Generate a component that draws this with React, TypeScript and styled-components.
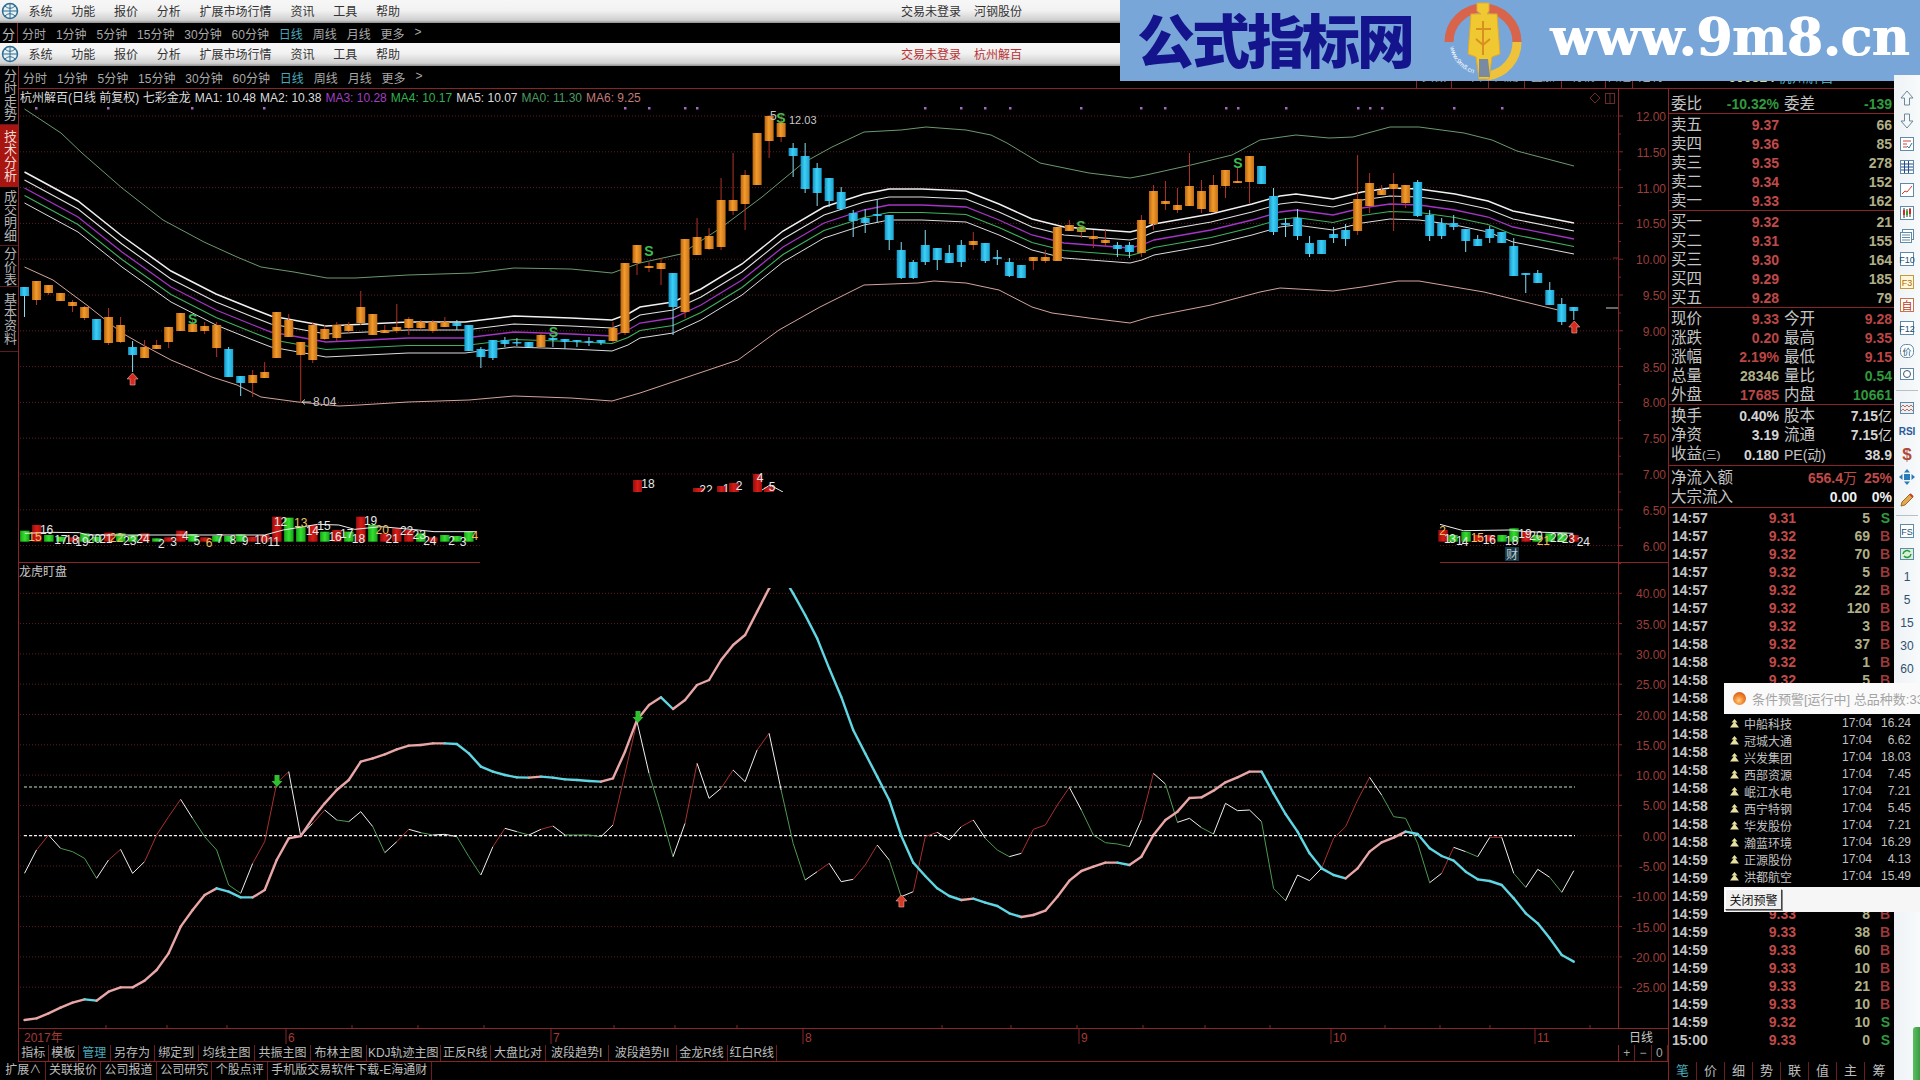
import React from "react";
import styled, { createGlobalStyle } from "styled-components";

const SANS = `"Liberation Sans", "Noto Sans CJK SC", sans-serif`;
const LINE = "#8a2429";

const Global = createGlobalStyle`
  html, body { margin: 0; padding: 0; background: #000; overflow: hidden; }
  body { font-family: ${SANS}; }
`;

/* ---------------- page frame ---------------- */
const Page = styled.div`
  position: relative;
  width: 1920px;
  height: 1080px;
  display: flex;
  overflow: hidden;
  background: #000;
  color: #b8b8b8;
  font-size: 12px;
`;
const MainCol = styled.div`
  width: 1894px;
  height: 1080px;
  display: flex;
  flex-direction: column;
`;
const MenuBar = styled.div`
  height: 23px;
  flex: none;
  box-sizing: border-box;
  display: flex;
  align-items: center;
  padding: 0 0 2px 1px;
  background: linear-gradient(#f7f7f7 0%, #f2f2f2 45%, #cfcfcf 88%, #8f8f8f 100%);
  color: #333;
`;
const MenuItem = styled.span`
  padding: 0 9.4px;
  white-space: nowrap;
`;
const MenuLogo = styled.svg`
  width: 18px;
  height: 18px;
  flex: none;
`;
const MenuStatus = styled.div<{ $alert?: boolean }>`
  margin-left: auto;
  margin-right: 872px;
  display: flex;
  gap: 13px;
  color: ${(p) => (p.$alert ? "#b83232" : "#333")};
`;
const Toolbar = styled.div`
  flex: none;
  height: 20px;
  display: flex;
  align-items: center;
`;
const ToolbarTall = styled(Toolbar)`
  height: 22px;
  padding-left: 4px;
  overflow: hidden;
`;
const CutTab = styled.span`
  width: 18px;
  height: 20px;
  flex: none;
  box-sizing: border-box;
  border-right: 1px solid ${LINE};
  font-size: 13px;
  text-align: center;
  line-height: 24px;
  overflow: hidden;
  margin-right: 4px;
`;
const PeriodList = styled.div`
  display: flex;
  gap: 9.9px;
`;
const Period = styled.span<{ $on?: boolean }>`
  white-space: nowrap;
  color: ${(p) => (p.$on ? "#4aa9bb" : "#a9a9a9")};
`;
const HiddenTabs = styled.div`
  margin-left: auto;
  display: flex;
  height: 22px;
`;
const HiddenTab = styled.span<{ $w: number }>`
  width: ${(p) => p.$w}px;
  box-sizing: border-box;
  border-left: 1px solid ${LINE};
  text-align: center;
  line-height: 22px;
  color: #aaa;
`;
const StockHead = styled.div`
  width: 226px;
  flex: none;
  display: flex;
  justify-content: center;
  gap: 3px;
  font-size: 14px;
  line-height: 22px;
`;
const StockCode = styled.span`
  color: #e8dc78;
  font-weight: 700;
`;
const StockName = styled.span`
  color: #4aa9bb;
`;

const Workspace = styled.div`
  flex: 1;
  min-height: 0;
  display: flex;
`;
const LeftTabs = styled.div`
  width: 19px;
  flex: none;
  box-sizing: border-box;
  border-right: 1px solid ${LINE};
  display: flex;
  flex-direction: column;
`;
const LeftTab = styled.div<{ $h: number; $on?: boolean }>`
  height: ${(p) => p.$h}px;
  flex: none;
  box-sizing: border-box;
  writing-mode: vertical-rl;
  display: flex;
  align-items: center;
  justify-content: center;
  font-size: 13px;
  line-height: 18px;
  border-bottom: 1px solid ${(p) => (p.$on ? "transparent" : "#5a1c20")};
  background: ${(p) => (p.$on ? "#a81410" : "transparent")};
  color: ${(p) => (p.$on ? "#f0d8d0" : "#b4b4b4")};
`;
const CenterCol = styled.div`
  width: 1875px;
  flex: none;
  display: flex;
  flex-direction: column;
`;
const WorkRow = styled.div`
  height: 974px;
  flex: none;
  display: flex;
  box-sizing: border-box;
  border-top: 1px solid ${LINE};
`;
const ChartArea = styled.div`
  width: 1649px;
  flex: none;
  display: flex;
  flex-direction: column;
`;
const Canvas = styled.div`
  position: relative;
  height: 956px;
  flex: none;
`;
const ChartSvg = styled.svg`
  display: block;
  width: 1649px;
  height: 956px;
  font-family: ${SANS};
`;
const Legend = styled.div`
  position: absolute;
  left: 1px;
  top: 1px;
  display: flex;
  gap: 4px;
  line-height: 16px;
  white-space: nowrap;
  color: #d8d8d8;
`;
const LegendItem = styled.span<{ $c?: string }>`
  color: ${(p) => p.$c ?? "#dcdcdc"};
`;
const AxisText = styled.text`
  fill: #9c3f3b;
  font-size: 12px;
  text-anchor: end;
`;
const DateText = styled.text`
  fill: #a33b38;
  font-size: 12px;
`;
const NoteText = styled.text<{ $s?: number }>`
  fill: #c8c8c8;
  font-size: ${(p) => p.$s ?? 12}px;
`;
const SignalText = styled.text`
  fill: #3dbb52;
  font-size: 14px;
  font-weight: 700;
  text-anchor: middle;
`;
const VolText = styled.text<{ $warm?: boolean }>`
  fill: ${(p) => (p.$warm ? "#f0c060" : "#e8e8e8")};
  font-size: 12px;
  text-anchor: middle;
  dominant-baseline: middle;
`;
const ChartTabs = styled.div`
  flex: 1;
  display: flex;
  align-items: center;
  box-sizing: border-box;
  border-bottom: 1px solid ${LINE};
`;
const ChartTab = styled.span<{ $on?: boolean; $w: number }>`
  height: 100%;
  width: ${(p) => p.$w}px;
  flex: none;
  box-sizing: border-box;
  text-align: center;
  line-height: 16px;
  white-space: nowrap;
  border-right: 1px solid #6a1c20;
  color: ${(p) => (p.$on ? "#4aa9bb" : "#bcbcbc")};
`;
const ZoomCtl = styled.div`
  margin-left: auto;
  width: 50px;
  height: 100%;
  display: flex;
  box-sizing: border-box;
  border-left: 1px solid ${LINE};
`;
const ZoomBtn = styled.span`
  flex: 1;
  text-align: center;
  line-height: 16px;
  border-right: 1px solid #6a1c20;
  color: #a8a8a8;
`;

/* ---------------- quote panel ---------------- */
const Panel = styled.div`
  width: 226px;
  flex: none;
  box-sizing: border-box;
  border-left: 1px solid ${LINE};
  display: flex;
  flex-direction: column;
`;
const Group = styled.div<{ $h: number; $top?: number }>`
  height: ${(p) => p.$h}px;
  flex: none;
  box-sizing: border-box;
  padding-top: ${(p) => p.$top ?? 0}px;
  border-bottom: 1px solid ${LINE};
`;
const QuoteRow = styled.div<{ $h?: number }>`
  height: ${(p) => p.$h ?? 19}px;
  padding: 0 2px;
  display: grid;
  grid-template-columns: 32px 76px 37px 76px;
  align-items: center;
  align-content: center;
  white-space: nowrap;
`;
const Label = styled.span`
  font-size: 15.5px;
  line-height: 16px;
  color: #c4c4c4;
`;
const Label2 = styled(Label)`
  margin-left: 5px;
`;
const LabelNarrow = styled(Label2)`
  font-size: 14px;
`;
const Small = styled.span`
  font-size: 11px;
`;
const Num = styled.span<{ $c?: string }>`
  font-size: 14px;
  line-height: 16px;
  font-weight: 700;
  text-align: right;
  color: ${(p) => p.$c ?? "#c04a4a"};
`;
const FlowRow = styled.div`
  height: 19px;
  padding: 0 2px;
  display: grid;
  grid-template-columns: 1fr 60px 35px;
  align-items: center;
  align-content: center;
  white-space: nowrap;
`;
const Trades = styled.div`
  padding-top: 1px;
  flex: 1;
`;
const TradeRow = styled.div`
  height: 18px;
  padding-left: 3px;
  display: grid;
  grid-template-columns: 40px 84px 74px 20px;
  align-items: center;
`;
const TradeTime = styled.span`
  font-size: 14px;
  font-weight: 700;
  color: #c4c4c4;
`;
const Unit = styled.span`
  font-weight: 400;
  font-size: 14px;
`;

/* ---------------- footer ---------------- */
const Footer = styled.div`
  height: 18px;
  flex: none;
  display: flex;
`;
const FooterLeft = styled.div`
  width: 1668px;
  flex: none;
  display: flex;
  padding-left: 2px;
  box-sizing: border-box;
`;
const FooterTab = styled.span`
  padding: 0 3.3px;
  line-height: 17px;
  white-space: nowrap;
  border-right: 1px solid #6a1c20;
  color: #bcbcbc;
`;
const FooterRight = styled.div`
  width: 226px;
  flex: none;
  display: flex;
  box-sizing: border-box;
  border-left: 1px solid ${LINE};
`;
const PanelTab = styled.span<{ $on?: boolean }>`
  width: 28px;
  flex: none;
  box-sizing: border-box;
  text-align: center;
  font-size: 13px;
  line-height: 18px;
  border-right: 1px solid #6a1c20;
  color: ${(p) => (p.$on ? "#4aa9bb" : "#bcbcbc")};
  &:last-child { border-right: 0; }
`;

/* ---------------- side toolbar ---------------- */
const SideBar = styled.div`
  width: 26px;
  height: 1080px;
  flex: none;
  box-sizing: border-box;
  padding-top: 86px;
  display: flex;
  flex-direction: column;
  align-items: center;
  background: linear-gradient(90deg, #eef3f6, #f8fafb);
`;
const SideSlot = styled.div`
  height: 23px;
  width: 100%;
  flex: none;
  display: flex;
  align-items: center;
  justify-content: center;
  font-size: 12px;
  color: #30506e;
`;
const SideRule = styled.div<{ $h: number }>`
  height: ${(p) => p.$h}px;
  width: 22px;
  flex: none;
  display: flex;
  align-items: center;
  &::after { content: ""; width: 100%; height: 1px; background: #b8c0c6; }
`;
const SideIcon = styled.svg`
  width: 18px;
  height: 18px;
  font-family: ${SANS};
`;
const ScrollThumb = styled.div`
  margin-top: auto;
  align-self: flex-end;
  width: 7px;
  height: 53px;
  border-radius: 3px 0 0 0;
  background: linear-gradient(90deg, #5cc060, #3a9a42);
`;

/* ---------------- overlays ---------------- */
const Banner = styled.div`
  position: absolute;
  left: 1120px;
  top: 0;
  width: 800px;
  height: 81px;
  clip-path: polygon(0 0, 100% 0, 100% 75px, 774px 75px, 774px 100%, 0 100%);
  background: #78a6d8;
  display: flex;
  align-items: center;
`;
const BannerTitle = styled.div`
  margin: -6px 0 0 17px;
  width: 276px;
  flex: none;
  font-family: "Noto Sans CJK SC", sans-serif;
  font-weight: 900;
  font-size: 58px;
  line-height: 76px;
  letter-spacing: -3px;
  white-space: nowrap;
  color: #14148c;
`;
const BannerLogo = styled.svg`
  margin-left: 30px;
  width: 80px;
  height: 80px;
  flex: none;
  font-family: ${SANS};
`;
const BannerUrl = styled.div`
  margin: -8px 0 0 27px;
  font-family: "DejaVu Serif", serif;
  font-weight: 700;
  font-size: 52px;
  letter-spacing: -0.3px;
  line-height: 70px;
  white-space: nowrap;
  text-shadow: 1px 0 #fff;
  color: #fff;
`;
const Popup = styled.div`
  position: absolute;
  left: 1724px;
  top: 683px;
  width: 196px;
  height: 229px;
  display: flex;
  flex-direction: column;
  background: #000;
`;
const PopupHead = styled.div`
  height: 31px;
  flex: none;
  display: flex;
  align-items: center;
  padding-left: 9px;
  gap: 6px;
  font-size: 13px;
  background: #fafafa;
  color: #a4a4a4;
  white-space: nowrap;
  overflow: hidden;
`;
const PopupBall = styled.span`
  width: 13px;
  height: 13px;
  flex: none;
  border-radius: 50%;
  background: radial-gradient(circle at 45% 65%, #ffd088 0, #f28a30 40%, #c83c10 100%);
`;
const PopupList = styled.div`
  flex: 1;
  padding-top: 0.5px;
`;
const PopupRow = styled.div`
  height: 17px;
  display: grid;
  grid-template-columns: 20px 98px 29px 40px;
  align-items: center;
  color: #c0c0c0;
`;
const PopupIcon = styled.svg`
  width: 9px;
  height: 9px;
  justify-self: center;
`;
const PopupPrice = styled.span`
  text-align: right;
`;
const PopupFoot = styled.div`
  height: 25px;
  flex: none;
  display: flex;
  align-items: center;
  padding-left: 1px;
  background: #f6f6f6;
`;
const CloseBtn = styled.button`
  width: 57px;
  height: 21px;
  padding: 0;
  font: 12px ${SANS};
  color: #111;
  background: #f0f0f0;
  border: 1px solid;
  border-color: #fff #444 #444 #fff;
  box-shadow: 1px 1px 0 #888;
`;

/* ---------------- data ---------------- */
const X = (i: number) => 24.5 + 12.01 * i;
const priceY = (p: number) => 116 + (12 - p) * 71.6;
const subY = (v: number) => 835.7 - 6.06 * v;

// kind: 0 orange, 1 blue; body top, body bottom, wick top, wick bottom
type K = [number, number, number, number?, number?];
const candles: K[] = [
  [1, 287, 296, 287, 317], [0, 281, 300, 281, 305], [0, 285, 293, 285, 295], [0, 293, 301], [0, 302, 306, 300, 312],
  [0, 307, 318, 306, 320], [1, 319, 340], [0, 317, 343, 308, 345], [0, 325, 342, 317, 343], [1, 347, 355, 341, 372],
  [0, 347, 358, 340, 358], [0, 345, 349, 340, 349], [0, 327, 342, 327, 348], [0, 313, 331], [0, 324, 332, 320, 332],
  [0, 326, 331, 322, 334], [0, 325, 348, 322, 357], [1, 349, 377, 347, 377], [1, 376, 383, 376, 396], [0, 375, 383, 370, 397],
  [0, 372, 378, 362, 378], [0, 312, 358], [0, 320, 337, 314, 337], [0, 342, 355, 342, 403], [0, 325, 360, 322, 363],
  [0, 329, 339, 325, 340], [0, 325, 338, 322, 341], [0, 325, 331, 322, 333], [0, 307, 323, 291, 325], [0, 314, 335],
  [0, 330, 333, 325, 333], [0, 327, 331, 304, 333], [0, 319, 328, 317, 335], [0, 322, 328, 320, 330], [0, 322, 331, 320, 333],
  [0, 322, 327, 317, 327], [1, 323, 326, 320, 330], [1, 325, 351], [1, 349, 357, 347, 368], [1, 340, 358, 340, 360],
  [1, 340, 344, 337, 347], [1, 342, 343, 338, 346], [1, 342, 347], [0, 335, 347, 332, 347], [1, 338, 340, 335, 347],
  [1, 339, 342, 339, 349], [1, 340, 342, 340, 347], [1, 341, 343, 337, 346], [1, 340, 343, 340, 345], [0, 328, 341, 322, 343],
  [0, 263, 333, 263, 335], [0, 245, 263, 245, 275], [0, 266, 268, 262, 272], [0, 263, 269, 258, 285], [1, 273, 307, 273, 335],
  [0, 239, 312, 239, 318], [0, 237, 255, 218, 255], [0, 236, 249, 228, 250], [0, 200, 247, 178, 250], [0, 200, 211, 153, 215],
  [0, 175, 204, 170, 230], [0, 133, 185], [0, 116, 141, 115, 158], [0, 123, 137, 115, 142], [1, 148, 156, 143, 177],
  [1, 156, 189, 143, 193], [1, 168, 193, 163, 206], [1, 178, 201, 178, 207], [1, 192, 209, 187, 210], [1, 213, 221, 210, 237],
  [1, 218, 223, 209, 233], [1, 214, 216, 199, 223], [1, 215, 240, 215, 250], [1, 250, 278, 242, 279], [1, 262, 278, 260, 279],
  [1, 245, 262, 230, 265], [1, 248, 260, 248, 270], [1, 253, 263, 245, 263], [1, 245, 262, 240, 267], [0, 241, 245, 232, 250],
  [1, 243, 261, 243, 263], [1, 257, 259, 250, 265], [1, 262, 276, 258, 277], [1, 265, 278], [0, 257, 261, 257, 270],
  [0, 257, 261, 250, 263], [0, 227, 261], [0, 225, 231, 220, 231], [0, 227, 232, 227, 238], [0, 236, 239, 230, 248],
  [0, 240, 243, 230, 246], [1, 245, 249, 242, 257], [1, 245, 252, 242, 258], [0, 220, 253, 215, 257], [0, 191, 224, 185, 230],
  [0, 201, 204, 181, 210], [0, 205, 210, 188, 213], [0, 186, 206, 153, 206], [0, 191, 209, 180, 213], [0, 185, 212, 175, 213],
  [0, 170, 186, 170, 198], [0, 181, 183, 167, 183], [0, 156, 182, 156, 203], [1, 166, 184], [1, 196, 232, 188, 235],
  [1, 223, 225, 218, 237], [1, 218, 236, 209, 240], [1, 243, 254, 236, 257], [1, 240, 254], [1, 234, 238, 227, 243],
  [1, 230, 239, 224, 246], [0, 199, 231, 155, 235], [0, 183, 206, 173, 213], [0, 190, 195, 185, 195], [0, 184, 189, 173, 231],
  [0, 185, 203, 185, 208], [1, 182, 216, 180, 217], [1, 215, 236, 210, 241], [1, 223, 236, 218, 239], [1, 223, 227, 215, 230],
  [1, 229, 241, 229, 252], [1, 239, 246, 235, 246], [1, 229, 238, 226, 243], [1, 232, 243], [1, 246, 276, 238, 276],
  [1, 273, 275, 273, 293], [1, 273, 283, 270, 283], [1, 290, 305, 282, 305], [1, 304, 322, 298, 325], [1, 307, 311, 307, 320],
];
type P = [number, number];
const pts = (a: P[], d = 0) => a.map(([x, y]) => `${x},${y + d}`).join(" ");
const upperBand: P[] = [[24.5,109],[61,133],[82,153],[122,188],[163,220],[204,242],[237,257],[261,267],[294,272],[327,278],[355,278],[408,275],[473,273],[514,268],[571,269],[612,273],[640,263],[681,254],[722,227],[762,197],[803,163],[832,147],[864,132],[901,130],[926,127],[966,130],[991,135],[1007,143],[1040,163],[1089,173],[1130,178],[1146,175],[1191,165],[1232,155],[1260,140],[1296,135],[1329,138],[1353,137],[1390,127],[1419,127],[1464,133],[1492,140],[1517,151],[1574,166]];
const midBand: P[] = [[24.5,188],[78,217],[122,252],[171,287],[216,310],[253,325],[271,332],[326,342],[408,338],[465,338],[514,332],[571,334],[612,336],[628,330],[640,323],[673,318],[701,305],[742,280],[783,247],[824,223],[864,210],[889,205],[922,205],[966,207],[999,220],[1032,235],[1064,243],[1130,248],[1142,245],[1154,240],[1211,230],[1252,220],[1280,212],[1296,210],[1333,215],[1362,208],[1390,204],[1419,205],[1455,210],[1488,217],[1513,227],[1574,239]];
const lowerBand: P[] = [[24.5,267],[53,280],[88,306],[122,333],[143,345],[171,360],[212,377],[237,385],[261,397],[298,402],[339,406],[359,405],[408,402],[469,400],[514,396],[571,398],[612,401],[640,393],[738,360],[779,330],[820,307],[864,285],[918,283],[934,281],[966,283],[999,290],[1032,307],[1052,313],[1089,318],[1130,323],[1150,317],[1211,305],[1260,292],[1280,288],[1333,291],[1362,287],[1398,281],[1419,281],[1484,292],[1517,300],[1558,310]];
const bandLines = [
  { d: -16, c: "#f0f0f0", w: 1.5 }, { d: -8, c: "#e0e0e0", w: 1.1 }, { d: 0, c: "#a334c4", w: 1.3 },
  { d: 7.5, c: "#3fb25e", w: 1.1 }, { d: 15, c: "#dcdcdc", w: 1 },
];
const dots = [36,108,192,264,625,649,685,697,925,961,985,1010,1081,1141,1165,1226,1238,1286,1358,1370,1382,1454,1502];

const thick = [1380,1375,1360,1343,1328,1318,1322,1295,1282,1282,1262,1230,1180,1100,1050,1005,985,995,1012,1012,990,900,835,828,775,730,690,660,605,595,583,568,557,555,550,550,552,580,620,635,645,652,653,650,653,658,660,663,665,655,575,480,435,412,447,420,375,360,300,255,225,155,85,40,100,165,235,325,410,510,580,650,720,827,908,948,985,1008,1020,1016,1028,1038,1060,1071,1065,1052,1010,962,933,920,908,908,915,890,825,780,755,714,712,692,667,652,635,635,700,762,815,880,925,945,955,925,875,847,833,815,822,865,888,902,935,958,963,975,1015,1060,1090,1135,1185,1205];
const thin = [940,870,825,865,875,895,955,900,868,940,905,825,770,718,775,830,870,975,1000,910,845,670,635,828,790,750,780,785,755,800,878,845,808,818,825,823,830,890,945,860,805,815,825,808,798,825,825,825,830,795,640,485,640,760,890,790,610,715,685,630,665,570,520,690,850,960,935,910,965,958,915,855,900,1010,995,830,817,840,800,780,835,870,890,880,808,795,735,682,750,825,848,852,860,780,640,672,787,775,803,822,730,752,750,785,985,1022,945,962,925,835,800,720,652,705,770,775,850,968,940,862,875,890,832,832,940,982,928,952,997,932];
const zy = (z: number) => 560 + z / 3;

const thickSegs = (() => {
  let up = true;
  return thick.slice(1).map((z, k) => {
    const d = z - thick[k];
    if (d !== 0) up = d < 0;
    return { x1: X(k), y1: zy(thick[k]), x2: X(k + 1), y2: zy(z), c: up ? "#e8a6a6" : "#5fd6e2" };
  });
})();
const thinSegs = (() => {
  let prev = 0;
  return thin.slice(1).map((z, k) => {
    const d = Math.sign(z - thin[k]) || prev;
    const c = d !== prev ? "#f0f0f0" : d < 0 ? "#a8302e" : "#4c9a50";
    prev = d;
    return { x1: X(k), y1: zy(thin[k]), x2: X(k + 1), y2: zy(z), c };
  });
})();

type V = [0 | 1, number];
const volLeft: V[] = [[0,152],[1,135],[0,165],[0,170],[1,172],[0,160],[0,170],[1,158],[0,160],[0,165],[1,160],[0,175],[1,172],[1,152],[0,162],[1,172],[0,167],[0,168],[0,163],[1,170],[1,165],[1,110],[0,113],[0,140],[1,135],[0,155],[1,150],[0,155],[1,110],[0,135],[1,160],[1,145],[1,150],[0,160],[1,172],[0,165],[0,168],[0,155]];
const labelsLeft: [string, number, number][] = [["15",66,172],["16",88,152],["17",115,182],["18",136,182],["19",155,188],["20",178,180],["21",200,180],["22",220,175],["23",245,185],["24",270,178],["2",305,195],["3",328,188],["4",350,170],["5",372,185],["6",395,190],["7",415,178],["8",440,182],["9",463,185],["10",493,182],["11",517,188],["12",530,128],["13",568,130],["14",590,155],["15",612,140],["16",633,172],["17",655,165],["18",677,178],["19",700,125],["20",722,152],["21",741,180],["22",768,155],["23",792,168],["24",812,185],["2",853,185],["3",875,188],["4",897,170]];
const maLeft: P[] = [[47,160],[100,157],[150,158],[165,165],[280,165],[500,165],[535,150],[600,133],[640,135],[670,148],[720,140],[790,150],[820,155],[900,155]];
const volRight: [0 | 1, number, number][] = [[1,1443,150],[0,1453,165],[0,1466,155],[1,1478,165],[1,1490,165],[0,1502,165],[0,1514,145],[1,1526,155],[0,1537,165],[0,1550,160],[0,1562,158],[1,1574,165]];
const labelsRight: [string, number, number][] = [["2",128,155],["1",142,178],["3",158,178],["1",178,185],["4",195,188],["15",232,175],["16",268,182],["18",335,185],["19",375,165],["20",408,170],["21",430,185],["22",470,175],["23",505,178],["24",550,188]];
const maRight: P[] = [[120,133],[190,152],[330,150],[378,155],[520,160]];
const fragBars: [number, number, number][] = [[633,9,480],[693,11,488],[717,9,486],[729,10,483],[753,9,474],[764,10,487]];
const fragLabels: [string, number, number][] = [["18",648,485],["22",706,491],["1",726,490],["2",739,487],["4",760,479],["5",772,488]];
const xDates: [string, number][] = [["6",288],["7",553],["8",805],["9",1081],["10",1333],["11",1537]];
const xTicks = [106,167,227,352,418,484,614,675,737,942,1011,1077,1143,1205,1270,1385,1440,1490,1590];

const periods = ["分时","1分钟","5分钟","15分钟","30分钟","60分钟","日线","周线","月线","更多",">"];
const menus = ["系统","功能","报价","分析","扩展市场行情","资讯","工具","帮助"];
const chartTabs: [string, number][] = [["指标",29.5],["模板",30.5],["管理",31.5],["另存为",44],["绑定到",44.5],["均线主图",56],["共振主图",56],["布林主图",56],["KDJ轨迹主图",73.5],["正反R线",50.5],["大盘比对",55],["波段趋势I",62.5],["波段趋势II",68],["金龙R线",51],["红白R线",49.5]];
const footTabs = ["扩展∧","关联报价","公司报道","公司研究","个股点评","手机版交易软件下载-E海通财"];

const asks: [string, string, string][] = [["卖五","9.37","66"],["卖四","9.36","85"],["卖三","9.35","278"],["卖二","9.34","152"],["卖一","9.33","162"]];
const bids: [string, string, string][] = [["买一","9.32","21"],["买二","9.31","155"],["买三","9.30","164"],["买四","9.29","185"],["买五","9.28","79"]];
const TAN = "#b0b088";
const GREEN = "#2f9a3e";
const WHITE = "#d4d4d4";
const RED = "#bc4646";
type Q = [string, string, string, string, string, string];
const stats: Q[] = [
  ["现价","9.33",RED,"今开","9.28",RED],
  ["涨跌","0.20",RED,"最高","9.35",RED],
  ["涨幅","2.19%",RED,"最低","9.15",RED],
  ["总量","28346",TAN,"量比","0.54",GREEN],
  ["外盘","17685",RED,"内盘","10661",GREEN],
];
// rows behind the alert popup carry only their time, the rest is hidden in the picture
const trades: [string, string?, string?, string?][] = [
  ["14:57","9.31","5","S"],["14:57","9.32","69","B"],["14:57","9.32","70","B"],["14:57","9.32","5","B"],["14:57","9.32","22","B"],["14:57","9.32","120","B"],["14:57","9.32","3","B"],
  ["14:58","9.32","37","B"],["14:58","9.32","1","B"],["14:58","9.32","5","B"],["14:58"],["14:58"],["14:58"],["14:58"],["14:58"],["14:58"],["14:58"],["14:58"],["14:58"],
  ["14:59"],["14:59"],["14:59"],["14:59","9.33","8","B"],["14:59","9.33","38","B"],["14:59","9.33","60","B"],["14:59","9.33","10","B"],["14:59","9.33","21","B"],["14:59","9.33","10","B"],["14:59","9.32","10","S"],
  ["15:00","9.33","0","S"],
];
const alerts: [string, string][] = [["中船科技","16.24"],["冠城大通","6.62"],["兴发集团","18.03"],["西部资源","7.45"],["岷江水电","7.21"],["西宁特钢","5.45"],["华发股份","7.21"],["瀚蓝环境","16.29"],["正源股份","4.13"],["洪都航空","15.49"]];

/* ---------------- icons ---------------- */
const Frame = () => <rect x="2.5" y="2.5" width="13" height="13" fill="#fff" stroke="#5f8aa8" />;
const sideTop: React.ReactNode[] = [
  <path d="M9 2 L15 9 H11.5 V16 H6.5 V9 H3 Z" fill="#f4f8fa" stroke="#6f8796" />,
  <path d="M9 16 L15 9 H11.5 V2 H6.5 V9 H3 Z" fill="#f4f8fa" stroke="#6f8796" />,
  <g><Frame /><path d="M5 6h8M5 9h4M5 12h4" stroke="#c44" /><path d="M9 11l2 2 3-5" stroke="#2a7a9a" fill="none" /></g>,
  <g><Frame /><path d="M3 6h12M3 9h12M3 12h12M6.5 3v12M10.5 3v12" stroke="#234a8a" /></g>,
  <g><Frame /><path d="M4 13l3-3 2 1 5-6" stroke="#d83a2a" fill="none" /></g>,
  <g><Frame /><path d="M6 4v10M9 5v8M12 4v9" stroke="#333" /><path d="M5 6h2v5H5zM11 5h2v5h-2z" fill="#d22" /><path d="M8 7h2v4H8z" fill="#2a2" /></g>,
  <g><rect x="4.5" y="2.5" width="11" height="10" fill="#fff" stroke="#5f8aa8" /><rect x="2.5" y="5.5" width="11" height="10" fill="#fff" stroke="#5f8aa8" /><path d="M4 8h8M4 10.5h8M4 13h8" stroke="#5f8aa8" /></g>,
  <g><Frame /><text x="9" y="13" fontSize="9" textAnchor="middle" fill="#21506e">F10</text></g>,
  <g><rect x="2.5" y="2.5" width="13" height="13" fill="#fff7d8" stroke="#c09a40" /><text x="9" y="13" fontSize="9" textAnchor="middle" fill="#b06a10">F3</text></g>,
  <g><rect x="2.5" y="2.5" width="13" height="13" fill="#fff" stroke="#c8744a" /><text x="9" y="13.5" fontSize="11" textAnchor="middle" fill="#c03a20">自</text></g>,
  <g><Frame /><text x="9" y="13" fontSize="9" textAnchor="middle" fill="#21506e">F12</text></g>,
  <g><rect x="2.5" y="2.5" width="13" height="13" rx="5" fill="#fff" stroke="#5f8aa8" /><text x="9" y="13" fontSize="9" textAnchor="middle" fill="#21506e">价</text></g>,
  <g><rect x="2.5" y="3.5" width="13" height="11" fill="#fff" stroke="#5f8aa8" /><circle cx="9" cy="9" r="3.5" fill="none" stroke="#456" /></g>,
];
const sideMid: React.ReactNode[] = [
  <g><rect x="2.5" y="3.5" width="13" height="11" fill="#e8f0f6" stroke="#5f8aa8" /><path d="M3 8l2-2 2 2 2-2 2 2 2-2 2 2M3 12l2-2 2 2 2-2 2 2 2-2 2 2" stroke="#c06a4a" fill="none" /></g>,
  <text x="9" y="13" fontSize="10" fontWeight="700" textAnchor="middle" fill="#2a5a9a">RSI</text>,
  <text x="9" y="15" fontSize="17" fontWeight="700" textAnchor="middle" fill="#b04a3a">$</text>,
  <g fill="#2a7ab8"><path d="M9 1l3 3.5H6zM9 17l3-3.5H6zM1 9l3.5-3v6zM17 9l-3.5-3v6z" /><rect x="6" y="6" width="6" height="6" /></g>,
  <g><path d="M3 15l1-4L12 3l3 3-8 8z" fill="#e0a850" stroke="#a06a20" /><path d="M12 3l3 3" stroke="#c0442a" strokeWidth="2" /></g>,
];
const sideLow: React.ReactNode[] = [
  <g><Frame /><text x="9" y="13" fontSize="9" textAnchor="middle" fill="#21506e">FS</text></g>,
  <g><rect x="2.5" y="3.5" width="13" height="11" fill="#d8f0d8" stroke="#5f8aa8" /><path d="M5 9a4 4 0 0 1 7-2M13 9a4 4 0 0 1-7 2" stroke="#2a9a3a" strokeWidth="1.6" fill="none" /></g>,
];

/* ---------------- main ---------------- */
const gridDots = "#5c1e20";

const Logo = () => (
  <MenuLogo viewBox="0 0 18 18">
    <circle cx="9" cy="9" r="7.5" fill="#e8f0f4" stroke="#2c6c90" strokeWidth="1.5" />
    <path d="M2 9h14M9 2v14M4 4c3 3 7 3 10 0M4 14c3-3 7-3 10 0" stroke="#2c6c90" fill="none" />
  </MenuLogo>
);

export default function App() {
  return (
    <Page>
      <Global />
      <MainCol>
        <MenuBar>
          <Logo />
          {menus.map((m) => <MenuItem key={m}>{m}</MenuItem>)}
          <MenuStatus><span>交易未登录</span><span>河钢股份</span></MenuStatus>
        </MenuBar>
        <Toolbar>
          <CutTab>分</CutTab>
          <PeriodList>{periods.map((p) => <Period key={p} $on={p === "日线"}>{p}</Period>)}</PeriodList>
        </Toolbar>
        <MenuBar>
          <Logo />
          {menus.map((m) => <MenuItem key={m}>{m}</MenuItem>)}
          <MenuStatus $alert><span>交易未登录</span><span>杭州解百</span></MenuStatus>
        </MenuBar>

        <Workspace>
          <LeftTabs>
            <LeftTab $h={59}>分时走势</LeftTab>
            <LeftTab $h={62} $on>技术分析</LeftTab>
            <LeftTab $h={59}>成交明细</LeftTab>
            <LeftTab $h={41}>分价表</LeftTab>
            <LeftTab $h={65}>基本资料</LeftTab>
          </LeftTabs>
          <CenterCol>
            <ToolbarTall>
              <PeriodList>{periods.map((p) => <Period key={p} $on={p === "日线"}>{p}</Period>)}</PeriodList>
              <HiddenTabs>
                <HiddenTab $w={35}>买做</HiddenTab>
                <HiddenTab $w={37}>五档</HiddenTab>
                <HiddenTab $w={36}>回测</HiddenTab>
                <HiddenTab $w={37}>叠加</HiddenTab>
                <HiddenTab $w={44}>行情</HiddenTab>
                <HiddenTab $w={27}>自选</HiddenTab>
                <HiddenTab $w={36}>定制</HiddenTab>
              </HiddenTabs>
              <StockHead><StockCode>600814</StockCode><StockName>杭州解百</StockName></StockHead>
            </ToolbarTall>
            <WorkRow>
              <ChartArea>
                <Canvas>
                  <ChartSvg viewBox="19 89 1649 956">
                    <defs>
                      <linearGradient id="ob"><stop offset="0" stopColor="#b9650e" /><stop offset=".45" stopColor="#f29c2c" /><stop offset="1" stopColor="#c6701a" /></linearGradient>
                      <linearGradient id="bb"><stop offset="0" stopColor="#1694c6" /><stop offset=".45" stopColor="#3cd0f6" /><stop offset="1" stopColor="#1ea2d2" /></linearGradient>
                      <linearGradient id="gv"><stop offset="0" stopColor="#18a818" /><stop offset=".5" stopColor="#34e030" /><stop offset="1" stopColor="#18a018" /></linearGradient>
                      <linearGradient id="rv"><stop offset="0" stopColor="#980e0e" /><stop offset=".5" stopColor="#d81c16" /><stop offset="1" stopColor="#a01010" /></linearGradient>
                      <clipPath id="fragClip"><rect x="620" y="460" width="190" height="32" /></clipPath>
                      <clipPath id="subClip"><rect x="19" y="588" width="1599" height="440" /></clipPath>
                    </defs>

                    {/* price grid and axis */}
                    {[12, 11.5, 11, 10.5, 10, 9.5, 9, 8.5, 8, 7.5, 7].map((p) => (
                      <line key={p} x1="20" x2="1618" y1={priceY(p)} y2={priceY(p)} stroke={gridDots} strokeDasharray="1 2" />
                    ))}
                    {[6.5, 6].map((p) => (
                      <g key={p} stroke={gridDots} strokeDasharray="1 2">
                        <line x1="20" x2="480" y1={priceY(p)} y2={priceY(p)} />
                        <line x1="1440" x2="1618" y1={priceY(p)} y2={priceY(p)} />
                      </g>
                    ))}
                    {[12, 11.5, 11, 10.5, 10, 9.5, 9, 8.5, 8, 7.5, 7, 6.5, 6].map((p) => (
                      <g key={p}>
                        <AxisText x="1666" y={priceY(p) + 5}>{p.toFixed(2)}</AxisText>
                        <line x1="1618" x2="1623" y1={priceY(p)} y2={priceY(p)} stroke={LINE} />
                        <line x1="1618" x2="1621" y1={priceY(p) + 18} y2={priceY(p) + 18} stroke={LINE} />
                      </g>
                    ))}
                    <line x1="1618.5" x2="1618.5" y1="89" y2="1028" stroke={LINE} />
                    <line x1="19" x2="480" y1="562.5" y2="562.5" stroke={LINE} />
                    <line x1="1440" x2="1668" y1="562.5" y2="562.5" stroke={LINE} />
                    <line x1="1606" x2="1618" y1="308" y2="308" stroke="#cfcfcf" />
                    <line x1="1613" x2="1618" y1="258" y2="258" stroke={LINE} />

                    {dots.map((x) => <rect key={x} x={x - 1} y="107" width="2.5" height="2.5" fill="#a468c4" />)}
                    <path d="M1595 93l5 5-5 5-5-5z" fill="none" stroke="#6c2a2a" />
                    <rect x="1605.5" y="93.5" width="9" height="10" fill="none" stroke="#6c2a2a" />
                    <line x1="1610" x2="1610" y1="94" y2="103" stroke="#6c2a2a" />

                    {/* bands */}
                    <polyline points={pts(upperBand)} fill="none" stroke="#78aa7a" strokeWidth=".9" />
                    <polyline points={pts(lowerBand)} fill="none" stroke="#eab8ae" strokeWidth=".9" />
                    {bandLines.map((b) => (
                      <polyline key={b.d} points={pts(midBand, b.d)} fill="none" stroke={b.c} strokeWidth={b.w} />
                    ))}

                    {/* candles */}
                    {candles.map(([kind, t, b, wt, wb], i) => {
                      const x = X(i);
                      return (
                        <g key={i}>
                          <line x1={x} x2={x} y1={wt ?? t} y2={wb ?? b} stroke={kind ? "#8adcf2" : "#b23226"} />
                          <rect x={x - 4.5} y={t} width="9" height={Math.max(b - t, 1.5)} fill={kind ? "url(#bb)" : "url(#ob)"} />
                        </g>
                      );
                    })}
                    <SignalText x="192.6" y="324">S</SignalText>
                    <SignalText x="553.5" y="337">S</SignalText>
                    <SignalText x="649" y="256">S</SignalText>
                    <SignalText x="781" y="123">S</SignalText>
                    <SignalText x="1081" y="231">S</SignalText>
                    <SignalText x="1238" y="168">S</SignalText>
                    <NoteText x="770" y="120">5</NoteText>
                    <NoteText $s={11} x="789" y="124">12.03</NoteText>
                    <NoteText x="313" y="406">8.04</NoteText>
                    <path d="M311 402H302l3-2.5M302 402l3 2.5" fill="none" stroke="#c8c8c8" />
                    <path d="M132.6 373l5.5 6h-3v6h-5v-6h-3z" fill="#d82a20" stroke="#f0b0a0" strokeWidth=".6" />
                    <path d="M1574.3 321l5.5 6h-3v6h-5v-6h-3z" fill="#d82a20" stroke="#f0b0a0" strokeWidth=".6" />

                    {/* volume fragments */}
                    {volLeft.map(([r, z], i) => (
                      <rect key={i} x={24.8 + 12 * i - 4.7} y={480 + z / 3} width="9.5" height={(185 - z) / 3} fill={r ? "url(#rv)" : "url(#gv)"} />
                    ))}
                    {volRight.map(([r, x, z]) => (
                      <rect key={x} x={x - 4.7} y={480 + z / 3} width="9.5" height={(185 - z) / 3} fill={r ? "url(#rv)" : "url(#gv)"} />
                    ))}
                    <g clipPath="url(#fragClip)">
                      {fragBars.map(([x, w, y]) => <rect key={x} x={x} y={y} width={w} height={492 - y} fill="url(#rv)" />)}
                      <polyline points="762,490 770,485 783,492" fill="none" stroke="#e8e8e8" />
                      {fragLabels.map(([t, x, y], i) => <VolText key={i} x={x} y={y}>{t}</VolText>)}
                    </g>
                    <polyline points={maLeft.map(([x, y]) => `${x / 1.889},${480 + y / 3}`).join(" ")} fill="none" stroke="#f0f0f0" />
                    <polyline points={maRight.map(([x, y]) => `${1400 + x / 3},${480 + y / 3}`).join(" ")} fill="none" stroke="#f0f0f0" />
                    {labelsLeft.map(([t, x, y], i) => <VolText key={i} x={x / 1.889} y={480 + y / 3} $warm={i % 7 === 0}>{t}</VolText>)}
                    {labelsRight.map(([t, x, y], i) => <VolText key={i} x={1400 + x / 3} y={480 + y / 3} $warm={i % 5 === 0}>{t}</VolText>)}
                    <rect x="1505" y="547" width="14" height="14" fill="#123a4a" />
                    <NoteText x="1506" y="559">财</NoteText>

                    {/* lower indicator */}
                    <NoteText x="19" y="576">龙虎盯盘</NoteText>
                    {[40, 35, 30, 25, 20, 15, 10, 5, 0, -5, -10, -15, -20, -25].map((v) => (
                      <g key={v}>
                        <line x1="20" x2="1618" y1={subY(v)} y2={subY(v)} stroke={gridDots} strokeDasharray="1 2" />
                        <line x1="1618" x2="1622" y1={subY(v)} y2={subY(v)} stroke={LINE} />
                        <AxisText x="1666" y={subY(v) + 5}>{v.toFixed(2)}</AxisText>
                      </g>
                    ))}
                    <line x1="24" x2="1575" y1="787" y2="787" stroke="#c0e4c0" strokeDasharray="3 2" />
                    <line x1="24" x2="1575" y1="835.7" y2="835.7" stroke="#f4f4f4" strokeWidth="1.3" strokeDasharray="3 2" />
                    {thinSegs.map((s, i) => <line key={i} x1={s.x1} y1={s.y1} x2={s.x2} y2={s.y2} stroke={s.c} />)}
                    <g clipPath="url(#subClip)">
                      {thickSegs.map((s, i) => <line key={i} x1={s.x1} y1={s.y1} x2={s.x2} y2={s.y2} stroke={s.c} strokeWidth="2.4" strokeLinecap="round" />)}
                    </g>
                    <path d="M277 787l-5.5-6h3v-6h5v6h3z" fill="#2fc02f" />
                    <path d="M638 723l-5.5-6h3v-6h5v6h3z" fill="#2fc02f" />
                    <path d="M901.4 895l5.5 6h-3v6h-5v-6h-3z" fill="#d83a28" stroke="#f0b0a0" strokeWidth=".6" />

                    {/* date axis */}
                    <line x1="19" x2="1668" y1="1028.5" y2="1028.5" stroke={LINE} />
                    {xTicks.map((x) => <line key={x} x1={x} x2={x} y1="1025" y2="1028" stroke={LINE} />)}
                    {xDates.map(([t, x]) => <line key={t} x1={x - 2} x2={x - 2} y1="1029" y2="1044" stroke={LINE} />)}
                    <DateText x="24" y="1042">2017年</DateText>
                    {xDates.map(([t, x]) => <DateText key={t} x={x} y="1042">{t}</DateText>)}
                    <NoteText x="1629" y="1042">日线</NoteText>
                  </ChartSvg>
                  <Legend>
                    <LegendItem>杭州解百(日线 前复权) 七彩金龙</LegendItem>
                    <LegendItem>MA1: 10.48</LegendItem>
                    <LegendItem>MA2: 10.38</LegendItem>
                    <LegendItem $c="#a33fc0">MA3: 10.28</LegendItem>
                    <LegendItem $c="#2fb350">MA4: 10.17</LegendItem>
                    <LegendItem>MA5: 10.07</LegendItem>
                    <LegendItem $c="#4c9b62">MA0: 11.30</LegendItem>
                    <LegendItem $c="#c27a78">MA6: 9.25</LegendItem>
                  </Legend>
                </Canvas>
                <ChartTabs>
                  {chartTabs.map(([t, w]) => <ChartTab key={t} $w={w} $on={t === "管理"}>{t}</ChartTab>)}
                  <ZoomCtl><ZoomBtn>+</ZoomBtn><ZoomBtn>−</ZoomBtn><ZoomBtn>0</ZoomBtn></ZoomCtl>
                </ChartTabs>
              </ChartArea>
              <Panel>
                <Group $h={25} $top={5}>
                  <QuoteRow><Label>委比</Label><Num $c={GREEN}>-10.32%</Num><Label2>委差</Label2><Num $c={GREEN}>-139</Num></QuoteRow>
                </Group>
                <Group $h={97} $top={1}>
                  {asks.map(([l, p, v]) => <QuoteRow key={l}><Label>{l}</Label><Num>{p}</Num><span /><Num $c={TAN}>{v}</Num></QuoteRow>)}
                </Group>
                <Group $h={97} $top={1}>
                  {bids.map(([l, p, v]) => <QuoteRow key={l}><Label>{l}</Label><Num>{p}</Num><span /><Num $c={TAN}>{v}</Num></QuoteRow>)}
                </Group>
                <Group $h={97} $top={1}>
                  {stats.map(([a, b, c, d, e, f]) => <QuoteRow key={a}><Label>{a}</Label><Num $c={c}>{b}</Num><Label2>{d}</Label2><Num $c={f}>{e}</Num></QuoteRow>)}
                </Group>
                <Group $h={61} $top={1}>
                  <QuoteRow $h={19.5}><Label>换手</Label><Num $c={WHITE}>0.40%</Num><Label2>股本</Label2><Num $c={WHITE}>7.15<Unit>亿</Unit></Num></QuoteRow>
                  <QuoteRow $h={19.5}><Label>净资</Label><Num $c={WHITE}>3.19</Num><Label2>流通</Label2><Num $c={WHITE}>7.15<Unit>亿</Unit></Num></QuoteRow>
                  <QuoteRow $h={19.5}><Label>收益<Small>(三)</Small></Label><Num $c={WHITE}>0.180</Num><LabelNarrow>PE(动)</LabelNarrow><Num $c={WHITE}>38.9</Num></QuoteRow>
                </Group>
                <Group $h={42} $top={2}>
                  <FlowRow><Label>净流入额</Label><Num>656.4<Unit>万</Unit></Num><Num>25%</Num></FlowRow>
                  <FlowRow><Label>大宗流入</Label><Num $c="#f0f0f0">0.00</Num><Num $c="#f0f0f0">0%</Num></FlowRow>
                </Group>
                <Trades>
                  {trades.map(([t, p, v, f], i) => (
                    <TradeRow key={i}>
                      <TradeTime>{t}</TradeTime>
                      <Num>{p}</Num>
                      <Num $c={TAN}>{v}</Num>
                      <Num $c={f === "S" ? GREEN : "#9c3a3a"}>{f}</Num>
                    </TradeRow>
                  ))}
                </Trades>
              </Panel>
            </WorkRow>
          </CenterCol>
        </Workspace>

        <Footer>
          <FooterLeft>{footTabs.map((t) => <FooterTab key={t}>{t}</FooterTab>)}</FooterLeft>
          <FooterRight>
            {["笔","价","细","势","联","值","主","筹"].map((t, i) => <PanelTab key={t} $on={i === 0}>{t}</PanelTab>)}
          </FooterRight>
        </Footer>
      </MainCol>

      <SideBar>
        {sideTop.map((n, i) => <SideSlot key={i}><SideIcon viewBox="0 0 18 18">{n}</SideIcon></SideSlot>)}
        <SideRule $h={11} />
        {sideMid.map((n, i) => <SideSlot key={i}><SideIcon viewBox="0 0 18 18">{n}</SideIcon></SideSlot>)}
        <SideRule $h={8} />
        {sideLow.map((n, i) => <SideSlot key={i}><SideIcon viewBox="0 0 18 18">{n}</SideIcon></SideSlot>)}
        {["1", "5", "15", "30", "60"].map((t) => <SideSlot key={t}>{t}</SideSlot>)}
        <ScrollThumb />
      </SideBar>

      <Banner>
        <BannerTitle>公式指标网</BannerTitle>
        <BannerLogo viewBox="0 0 80 80">
          <path d="M6 41 A34 34 0 0 1 74 41" fill="none" stroke="#d8644c" strokeWidth="9" />
          <path d="M74 41 A34 34 0 0 1 44 75" fill="none" stroke="#eec23a" strokeWidth="9" />
          <path d="M34 2h12v8l-2 3h10l3 40-8 3-3 22H36l-3-22-8-3 3-40h10l-4-3z" fill="#f0c832" stroke="#e0a830" />
          <path d="M33 28h15M40 20v34M33 38l7 6 7-6" stroke="#d89020" strokeWidth="2" fill="none" />
          <path d="M36 58h9l2 18h-11z" fill="#7a8aa0" />
          <path id="lowerText" d="M7 46 A34 34 0 0 0 32 73" fill="none" />
          <text fontSize="6.5" fill="#fff"><textPath href="#lowerText">www.9m8.cn</textPath></text>
        </BannerLogo>
        <BannerUrl>www.9m8.cn</BannerUrl>
      </Banner>

      <Popup>
        <PopupHead><PopupBall />条件预警[运行中] 总品种数:333</PopupHead>
        <PopupList>
          {alerts.map(([n, p]) => (
            <PopupRow key={n}>
              <PopupIcon viewBox="0 0 9 9"><path d="M4.5 0L7.5 3.5H1.5zM4.5 2.5L9 8.5H0z" fill="#e8e0a0" /></PopupIcon>
              <span>{n}</span>
              <span>17:04</span>
              <PopupPrice>{p}</PopupPrice>
            </PopupRow>
          ))}
        </PopupList>
        <PopupFoot><CloseBtn>关闭预警</CloseBtn></PopupFoot>
      </Popup>
    </Page>
  );
}
